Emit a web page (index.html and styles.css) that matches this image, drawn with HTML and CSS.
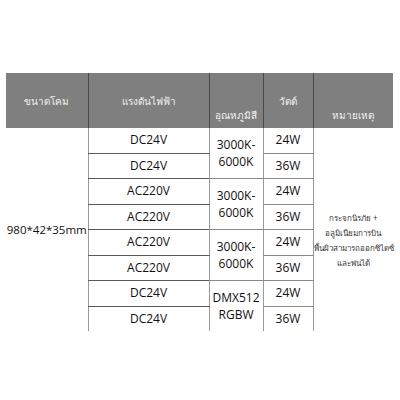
FILE: index.html
```html
<!DOCTYPE html>
<html>
<head>
<meta charset="utf-8">
<link rel="stylesheet" href="styles.css">
</head>
<body>
<table class="spec">
  <colgroup>
    <col class="c1"><col class="c2"><col class="c3"><col class="c4"><col class="c5">
  </colgroup>
  <thead>
    <tr>
      <th class="h-mid">ขนาดโคม</th>
      <th class="h-mid">แรงดันไฟฟ้า</th>
      <th class="h-low">อุณหภูมิสี</th>
      <th class="h-mid">วัตต์</th>
      <th class="h-low">หมายเหตุ</th>
    </tr>
  </thead>
  <tbody>
    <tr>
      <td rowspan="8" class="size">980*42*35mm</td>
      <td class="volt">DC24V</td>
      <td rowspan="2" class="temp">3000K-<br>6000K</td>
      <td class="watt">24W</td>
      <td rowspan="8" class="note">กระจกนิรภัย +<br>อลูมิเนียมการบิน<br>พื้นผิวสามารถออกซิไดซ์<br>และพ่นได้</td>
    </tr>
    <tr><td class="volt">DC24V</td><td class="watt">36W</td></tr>
    <tr><td class="volt">AC220V</td><td rowspan="2" class="temp">3000K-<br>6000K</td><td class="watt">24W</td></tr>
    <tr><td class="volt">AC220V</td><td class="watt">36W</td></tr>
    <tr><td class="volt">AC220V</td><td rowspan="2" class="temp">3000K-<br>6000K</td><td class="watt">24W</td></tr>
    <tr><td class="volt">AC220V</td><td class="watt">36W</td></tr>
    <tr><td class="volt">DC24V</td><td rowspan="2" class="temp last">DMX512<br>RGBW</td><td class="watt">24W</td></tr>
    <tr class="last"><td class="volt">DC24V</td><td class="watt">36W</td></tr>
  </tbody>
</table>
</body>
</html>
```
FILE: styles.css
```css
html, body {
  margin: 0;
  padding: 0;
  background: #ffffff;
}
body {
  padding: 73px 0 0 6px;
  font-family: "Open Sans", "Noto Sans", sans-serif;
}
.spec {
  border-collapse: collapse;
  table-layout: fixed;
  width: 387px;
}
.c1 { width: 82px; }
.c2 { width: 121px; }
.c3 { width: 54px; }
.c4 { width: 50px; }
.c5 { width: 80px; }

.spec th {
  background: #7f7f7f;
  color: #f2f2f2;
  font-weight: normal;
  font-size: 10px;
  height: 50px;
  padding: 0;
  text-align: center;
  border-left: 1px solid #4a4a4a;
  font-family: "Noto Sans", "DejaVu Sans", sans-serif;
}
.spec th:first-child { border-left: none; }
.spec th.h-mid { vertical-align: middle; padding-top: 2px; }
.spec th.h-low { vertical-align: bottom; padding-bottom: 5px; }

.spec td {
  padding: 0;
  height: 24.5px;
  text-align: center;
  vertical-align: middle;
  font-size: 12px;
  line-height: 16px;
  color: #111;
}
.spec td.size {
  font-size: 11.5px;
  white-space: nowrap;
}
.spec td.volt {
  border-left: 1px solid #9a9a9a;
  border-bottom: 1px solid #5a5a5a;
}
.spec td.temp {
  border-left: 1px solid #9a9a9a;
  border-bottom: 1px solid #8a8a8a;
  line-height: 17px;
}
.spec td.watt {
  border-left: 1px solid #9a9a9a;
  border-right: 1px solid #9a9a9a;
  border-bottom: 1px solid #8a8a8a;
}
.spec tr.last td.volt,
.spec tr.last td.watt,
.spec td.temp.last { border-bottom: none; }

.spec td.note {
  font-size: 8px;
  line-height: 15px;
  color: #333;
  white-space: nowrap;
  padding-top: 20px;
  font-family: "Noto Sans", "DejaVu Sans", sans-serif;
}
```
